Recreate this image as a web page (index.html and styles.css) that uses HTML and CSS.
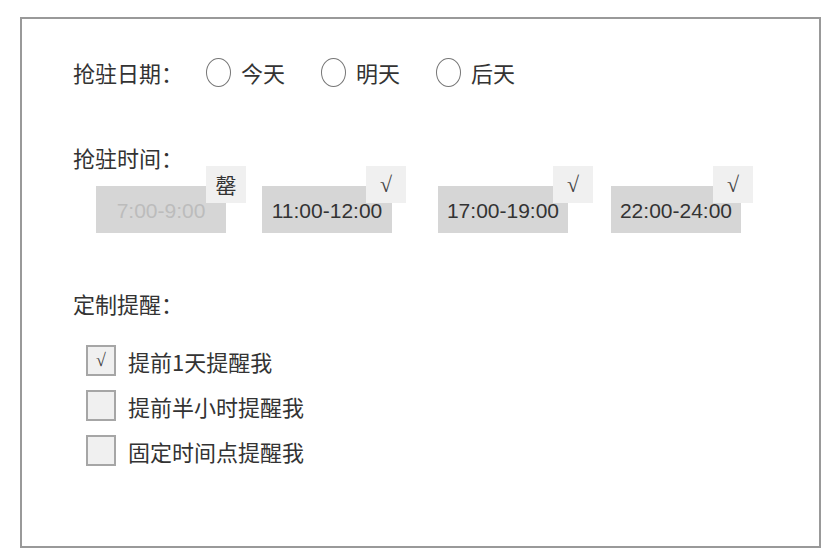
FILE: index.html
```html
<!DOCTYPE html>
<html lang="zh-CN">
<head>
	<meta charset="utf-8">
	<title>抢驻设置</title>
	<link rel="stylesheet" href="styles.css">
</head>
<body>
	<div class="panel">
		<div class="row date-row">
			<span class="label">抢驻日期：</span>
			<div class="radios">
				<label class="radio"><span class="circle"></span>今天</label>
				<label class="radio"><span class="circle"></span>明天</label>
				<label class="radio"><span class="circle"></span>后天</label>
			</div>
		</div>

		<p class="label time-label">抢驻时间：</p>
		<div class="times">
			<div class="slot full">7:00-9:00<span class="tag">罄</span></div>
			<div class="slot">11:00-12:00<span class="tag">√</span></div>
			<div class="slot">17:00-19:00<span class="tag">√</span></div>
			<div class="slot">22:00-24:00<span class="tag">√</span></div>
		</div>

		<p class="label remind-label">定制提醒：</p>
		<ul class="checks">
			<li><span class="box">√</span>提前1天提醒我</li>
			<li><span class="box"></span>提前半小时提醒我</li>
			<li><span class="box"></span>固定时间点提醒我</li>
		</ul>
	</div>
</body>
</html>
```

FILE: styles.css
```css
body {
	margin: 0;
	font-family: "Noto Sans CJK SC", "Liberation Sans", sans-serif;
	color: #333;
	background: #fff;
}
.panel {
	box-sizing: border-box;
	width: 801px;
	height: 531px;
	margin: 17px 0 0 20px;
	border: 2px solid #999;
	padding: 38px 0 0 51px;
}
.label {
	font-size: 22px;
	line-height: 22px;
	margin: 0;
}
.row {
	display: flex;
	align-items: center;
	height: 30px;
}
.radios {
	display: flex;
	gap: 36px;
	margin-left: 23px;
}
.radio {
	display: flex;
	align-items: center;
	font-size: 22px;
	line-height: 30px;
}
.circle {
	width: 25px;
	height: 29px;
	border: 1px solid #777;
	border-radius: 50%;
	margin-right: 10px;
	box-sizing: border-box;
}

/* time slots */
.time-label {
	margin-top: 59px;
}
.times {
	display: flex;
	margin-top: 18px;
	margin-left: 23px;
}
.slot {
	position: relative;
	width: 130px;
	height: 47px;
	background: #d6d6d6;
	font-family: "Liberation Sans", sans-serif;
	font-size: 21px;
	line-height: 50px;
	text-align: center;
	color: #333;
}
.slot.full {
	color: #bcbcbc;
}
.slot:nth-child(2) { margin-left: 36px; }
.slot:nth-child(3) { margin-left: 46px; }
.slot:nth-child(4) { margin-left: 43px; }
.tag {
	position: absolute;
	top: -20px;
	width: 40px;
	height: 37px;
	background: #f0f0f0;
	color: #444;
	font-family: "Liberation Serif", "Noto Sans CJK SC", serif;
	font-size: 22px;
	line-height: 37px;
	text-align: center;
}
.slot:nth-child(1) .tag { left: 110px; font-family: "Noto Sans CJK SC", sans-serif; font-size: 21px; color: #333; }
.slot:nth-child(2) .tag { left: 104px; }
.slot:nth-child(3) .tag { left: 115px; }
.slot:nth-child(4) .tag { left: 102px; }

/* reminders */
.remind-label {
	margin-top: 59px;
}
.checks {
	list-style: none;
	margin: 31px 0 0 13px;
	padding: 0;
	display: flex;
	flex-direction: column;
	gap: 14px;
}
.checks li {
	display: flex;
	align-items: center;
	height: 31px;
	font-size: 22px;
}
.box {
	box-sizing: border-box;
	width: 30px;
	height: 31px;
	border: 2px solid #a6a6a6;
	background: #f0f0f0;
	margin-right: 12px;
	color: #444;
	font-family: "Liberation Serif", serif;
	font-size: 18px;
	line-height: 27px;
	text-align: center;
}
```
